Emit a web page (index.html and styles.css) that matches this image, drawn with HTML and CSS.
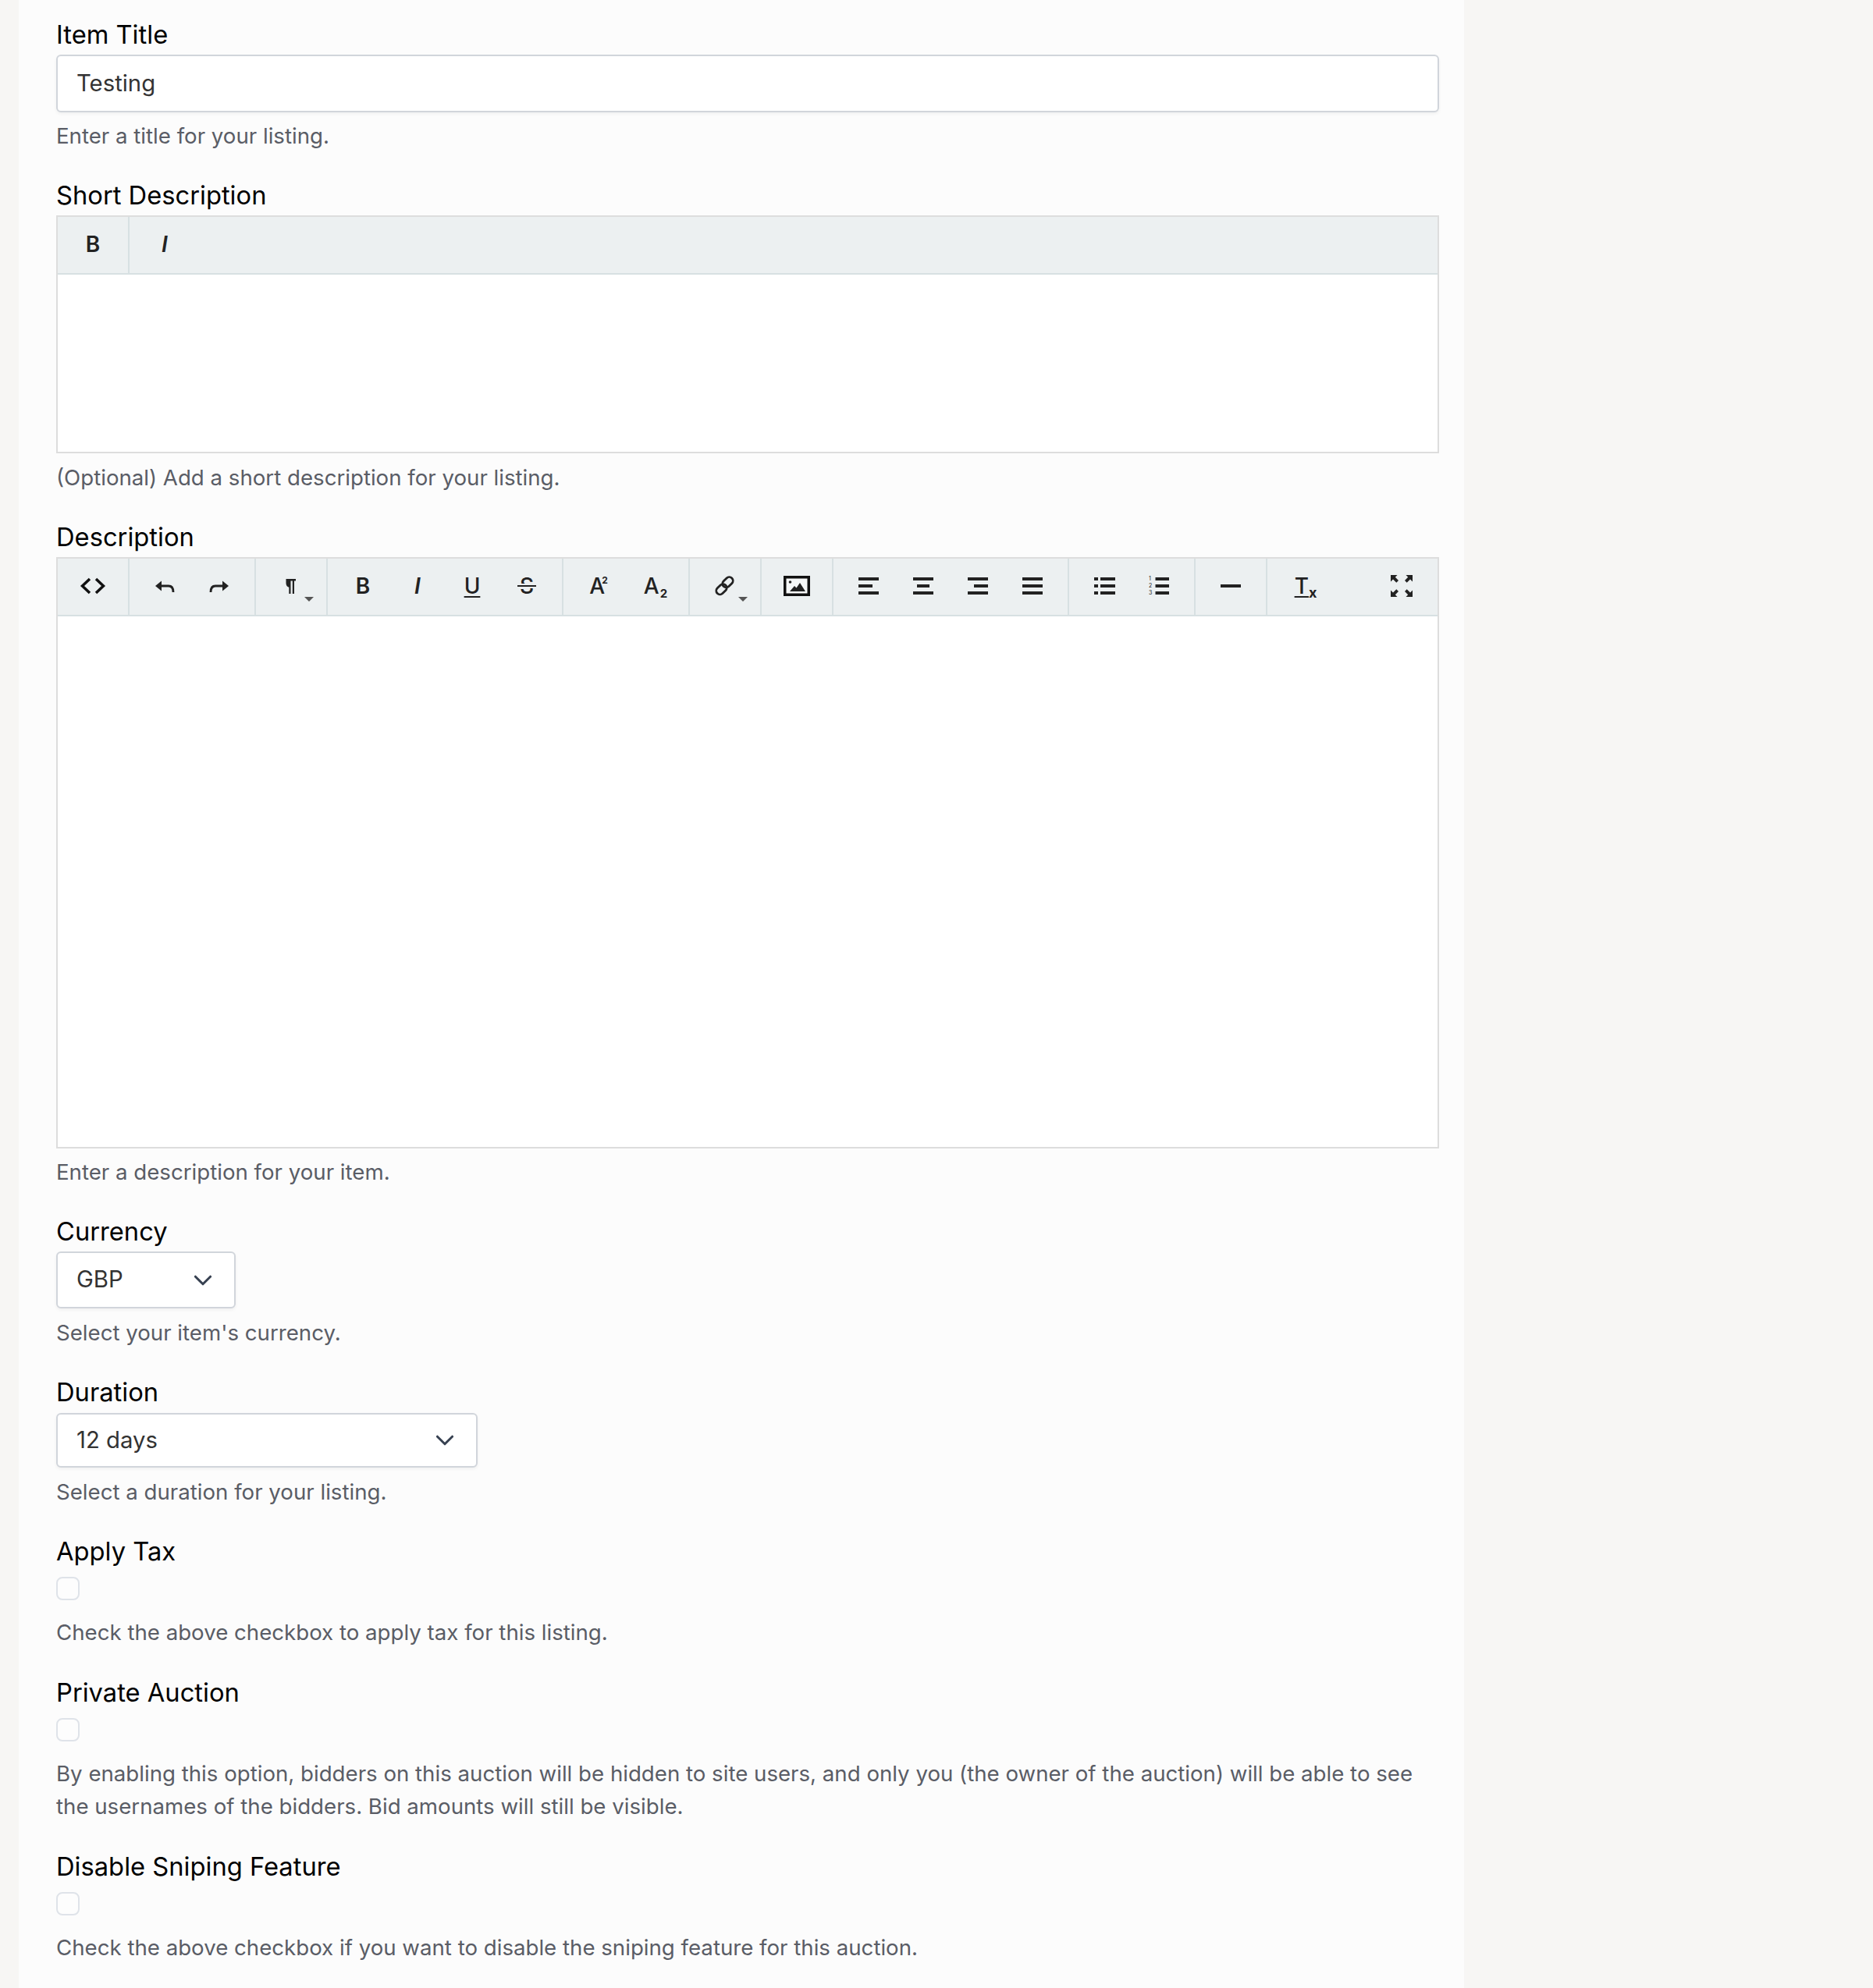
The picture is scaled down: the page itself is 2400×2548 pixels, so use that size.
FILE: index.html
```html
<!DOCTYPE html>
<html lang="en">
<head>
    <meta charset="UTF-8">
    <title>Create Listing</title>
    <link rel="stylesheet" href="styles.css">
</head>
<body>
    <main class="panel">
        <div class="field">
            <label class="label">Item Title</label>
            <input class="input" type="text" value="Testing">
            <p class="help">Enter a title for your listing.</p>
        </div>

        <div class="field">
            <label class="label">Short Description</label>
            <div class="editor">
                <div class="pane">
                    <div class="group"><button class="btn glyph-b">B</button></div>
                    <div class="group plain"><button class="btn glyph-i">I</button></div>
                </div>
                <div class="editor-body short"></div>
            </div>
            <p class="help help-loose">(Optional) Add a short description for your listing.</p>
        </div>

        <div class="field">
            <label class="label">Description</label>
            <div class="editor">
                <div class="pane">
                    <div class="group">
                        <button class="btn"><svg class="icon" viewBox="0 0 34 34"><path class="line" d="M13 8 L3.5 17 L13 26 M21 8 L30.5 17 L21 26"/></svg></button>
                    </div>
                    <div class="group">
                        <button class="btn"><svg class="icon" viewBox="0 0 34 34"><path d="M5 17 L13 10.5 V23.5 Z"/><path class="line thin" d="M11 17 H22 C26 17 28 19.5 28 25"/></svg></button>
                        <button class="btn"><svg class="icon" viewBox="0 0 34 34"><path d="M29 17 L21 10.5 V23.5 Z"/><path class="line thin" d="M23 17 H12 C8 17 6 19.5 6 25"/></svg></button>
                    </div>
                    <div class="group">
                        <button class="btn drop"><svg class="icon" viewBox="0 0 34 34"><path d="M10.5 8 H23 V10.5 H21 V27 H18.8 V10.5 H16.5 V27 H14.3 V18.5 C12 18.5 10.5 16 10.5 13 Z"/></svg></button>
                    </div>
                    <div class="group">
                        <button class="btn glyph-b">B</button>
                        <button class="btn glyph-i">I</button>
                        <button class="btn glyph-u">U</button>
                        <button class="btn glyph-s"><span class="strike">S</span></button>
                    </div>
                    <div class="group">
                        <button class="btn glyph-a">A<sup>2</sup></button>
                        <button class="btn glyph-a">A<sub>2</sub></button>
                    </div>
                    <div class="group">
                        <button class="btn drop"><svg class="icon" viewBox="0 0 34 34"><g class="line chain"><rect x="13" y="7.5" width="15" height="9.5" rx="4.75" transform="rotate(-45 20.5 12.25)"/><rect x="5" y="16.5" width="15" height="9.5" rx="4.75" transform="rotate(-45 12.5 21.25)"/></g></svg></button>
                    </div>
                    <div class="group">
                        <button class="btn"><svg class="icon" viewBox="0 0 34 34"><rect class="frame" x="1.75" y="5.75" width="30.5" height="22.5"/><circle cx="8.5" cy="12" r="1.8"/><path d="M8 24 L14 17 L16.5 19.5 L21 13 L28 24 Z"/></svg></button>
                    </div>
                    <div class="group">
                        <button class="btn"><svg class="icon" viewBox="0 0 34 34"><path d="M4 6 H30 V10 H4 Z M4 15 H22 V19 H4 Z M4 24 H30 V28 H4 Z"/></svg></button>
                        <button class="btn"><svg class="icon" viewBox="0 0 34 34"><path d="M4 6 H30 V10 H4 Z M9 15 H25 V19 H9 Z M4 24 H30 V28 H4 Z"/></svg></button>
                        <button class="btn"><svg class="icon" viewBox="0 0 34 34"><path d="M4 6 H30 V10 H4 Z M12 15 H30 V19 H12 Z M4 24 H30 V28 H4 Z"/></svg></button>
                        <button class="btn"><svg class="icon" viewBox="0 0 34 34"><path d="M4 6 H30 V10 H4 Z M4 15 H30 V19 H4 Z M4 24 H30 V28 H4 Z"/></svg></button>
                    </div>
                    <div class="group">
                        <button class="btn"><svg class="icon" viewBox="0 0 34 34"><path d="M4 6 H9 V10 H4 Z M4 15 H9 V19 H4 Z M4 24 H9 V28 H4 Z M12 6 H31 V10 H12 Z M12 15 H31 V19 H12 Z M12 24 H31 V28 H12 Z"/></svg></button>
                        <button class="btn"><svg class="icon" viewBox="0 0 34 34"><text class="num" x="4" y="10">1</text><text class="num" x="4" y="19">2</text><text class="num" x="4" y="28">3</text><path d="M12.5 6 H30 V10 H12.5 Z M12.5 15 H30 V19 H12.5 Z M12.5 24 H30 V28 H12.5 Z"/></svg></button>
                    </div>
                    <div class="group">
                        <button class="btn"><svg class="icon" viewBox="0 0 34 34"><path d="M4 15 H30 V19 H4 Z"/></svg></button>
                    </div>
                    <div class="group plain">
                        <button class="btn glyph-t"><span class="tee">T</span><sub>x</sub></button>
                    </div>
                    <div class="group plain right">
                        <button class="btn"><svg class="icon" viewBox="0 0 34 34">
                            <path d="M3 3 H11.5 L8.8 5.7 L13 10 L10.3 12.7 L6 8.5 L3 11.5 Z"/>
                            <path d="M31 3 H22.5 L25.2 5.7 L21 10 L23.7 12.7 L28 8.5 L31 11.5 Z"/>
                            <path d="M3 31 H11.5 L8.8 28.3 L13 24 L10.3 21.3 L6 25.5 L3 22.5 Z"/>
                            <path d="M31 31 H22.5 L25.2 28.3 L21 24 L23.7 21.3 L28 25.5 L31 22.5 Z"/>
                        </svg></button>
                    </div>
                </div>
                <div class="editor-body tall"></div>
            </div>
            <p class="help">Enter a description for your item.</p>
        </div>

        <div class="field">
            <label class="label">Currency</label>
            <select class="select currency"><option>GBP</option></select>
            <p class="help help-loose">Select your item's currency.</p>
        </div>

        <div class="field">
            <label class="label">Duration</label>
            <select class="select duration"><option>12 days</option></select>
            <p class="help help-loose">Select a duration for your listing.</p>
        </div>

        <div class="field field-check">
            <label class="label">Apply Tax</label>
            <input class="check" type="checkbox">
            <p class="help">Check the above checkbox to apply tax for this listing.</p>
        </div>

        <div class="field field-check">
            <label class="label">Private Auction</label>
            <input class="check" type="checkbox">
            <p class="help">By enabling this option, bidders on this auction will be hidden to site users, and only you (the owner of the auction) will be able to see the usernames of the bidders. Bid amounts will still be visible.</p>
        </div>

        <div class="field field-check">
            <label class="label">Disable Sniping Feature</label>
            <input class="check" type="checkbox">
            <p class="help">Check the above checkbox if you want to disable the sniping feature for this auction.</p>
        </div>
    </main>
</body>
</html>
```

FILE: styles.css
```css
* {
    box-sizing: border-box;
}

body {
    margin: 0;
    padding-left: 24px;
    background: #f7f6f4;
    font-family: Inter, "Liberation Sans", sans-serif;
    color: #000;
}

.panel {
    width: 1852px;
    height: 2548px;
    padding: 20px 32px 0 48px;
    background: #fcfcfc;
}

.field {
    margin-bottom: 31px;
}

.field-check {
    margin-bottom: 32px;
}

.label {
    display: block;
    height: 48px;
    margin-bottom: 2px;
    font-size: 32.7px;
    line-height: 48px;
}

.help {
    margin: 9px 0 0;
    font-size: 27.65px;
    line-height: 42px;
    color: #5a5d66;
}

.help-loose {
    margin-top: 10px;
}

.input,
.select {
    display: block;
    font-family: inherit;
    font-size: 29.3px;
    color: #333;
    background-color: #fff;
    border: 2px solid #d1d5db;
    border-radius: 6px;
    box-shadow: 0 2px 4px rgba(0, 0, 0, 0.05);
    outline: none;
}

.input {
    width: 100%;
    height: 74px;
    padding: 0 24px 2px;
}

.select {
    appearance: none;
    padding: 0 24px 2px;
    background-image: url("data:image/svg+xml,%3Csvg xmlns='http://www.w3.org/2000/svg' viewBox='0 0 20 20'%3E%3Cpath fill='none' stroke='%23374151' stroke-width='1.25' stroke-linecap='round' stroke-linejoin='round' d='M6 8l4 4 4-4'/%3E%3C/svg%3E");
    background-repeat: no-repeat;
    background-position: right 16px center;
    background-size: 48px 48px;
}

.currency {
    width: 230px;
    height: 73px;
}

.duration {
    width: 540px;
    height: 70px;
    margin-top: 3px;
}

.check {
    display: block;
    appearance: none;
    width: 30px;
    height: 30px;
    margin: 9px 0 20px;
    background: #fdfdfd;
    border: 2px solid #dfe3e9;
    border-radius: 8px;
}

/* rich text editor */
.editor {
    border: 2px solid #ddd;
    background: #fff;
}

.pane {
    display: flex;
    height: 74px;
    background: #ecf0f1;
    border-bottom: 2px solid #d7e0e2;
}

.group {
    display: flex;
    height: 72px;
    padding: 0 10px;
    border-right: 2px solid #d7e0e2;
}

.group.plain {
    border-right: 0;
}

.group.right {
    margin-left: auto;
    padding-right: 11px;
}

.btn {
    position: relative;
    display: flex;
    align-items: center;
    justify-content: center;
    width: 70px;
    height: 70px;
    padding: 0;
    border: 0;
    background: none;
    font-family: inherit;
    font-size: 28px;
    line-height: 1;
    color: #222;
}

.icon {
    display: block;
    width: 34px;
    height: 34px;
    fill: #222;
}

.line {
    fill: none;
    stroke: #111;
    stroke-width: 3.5;
}

.line.thin {
    stroke: #222;
    stroke-width: 2.8;
}

.chain {
    stroke: #222;
    stroke-width: 2.8;
}

.frame {
    fill: #f6f8f8;
    stroke: #111;
    stroke-width: 3.5;
}

.num {
    font-size: 7px;
    font-family: Inter, sans-serif;
}

/* little caret on the buttons with a dropdown */
.drop::after {
    content: "";
    position: absolute;
    right: 6px;
    bottom: 15px;
    border-top: 6px solid #555;
    border-left: 6px solid transparent;
    border-right: 6px solid transparent;
}

.glyph-b {
    font-weight: 600;
}

.glyph-i {
    font-style: italic;
    font-weight: 600;
}

.glyph-u {
    font-weight: 500;
    text-decoration: underline;
    text-decoration-thickness: 2px;
    text-underline-offset: 3px;
}

.strike {
    position: relative;
    font-weight: 500;
}

.strike::after {
    content: "";
    position: absolute;
    left: -3px;
    right: -3px;
    top: 13px;
    height: 2px;
    background: #222;
    outline: 2px solid #ecf0f1;
}

.glyph-a {
    font-weight: 500;
}

.glyph-a sup {
    font-size: 12px;
    font-weight: 700;
    margin-left: -4px;
    align-self: flex-start;
    margin-top: 22px;
}

.glyph-a sub {
    font-size: 15px;
    font-weight: 700;
    margin-left: 1px;
    margin-right: -6px;
    align-self: flex-end;
    margin-bottom: 18px;
}

.glyph-t {
    font-weight: 500;
}

.tee {
    text-decoration: underline;
    text-decoration-thickness: 2px;
    text-underline-offset: 3px;
}

.glyph-t sub {
    font-size: 18px;
    font-weight: 700;
    margin-right: -8px;
    align-self: flex-end;
    margin-bottom: 17px;
}

.editor-body.short {
    height: 227px;
}

.editor-body.tall {
    height: 680px;
}
```
